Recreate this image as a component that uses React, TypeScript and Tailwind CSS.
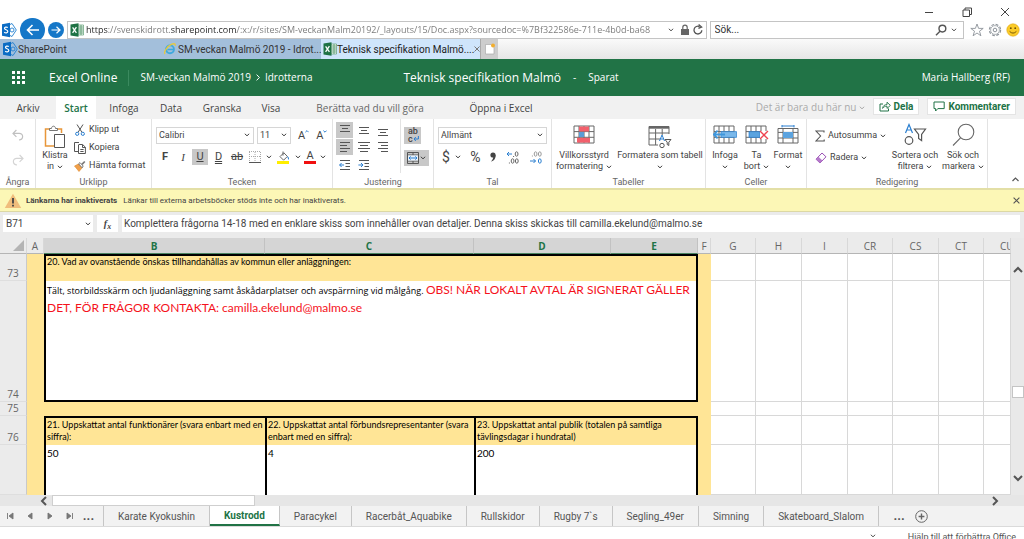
import React from 'react';
import { clsx } from 'clsx';

type Children = { children?: React.ReactNode };

const Chevron: React.FC<{ className?: string }> = ({ className }) => (
  <svg viewBox="0 0 6 4" className={clsx('inline-block w-[6px] h-1 shrink-0', className)} fill="none" stroke="currentColor">
    <path d="M0.8 0.8 L3 2.8 L5.2 0.8" />
  </svg>
);

const SharePointIcon = () => (
  <svg viewBox="0 0 16 16" className="w-4 h-4 shrink-0">
    <path d="M8 3 L11 1.5 L15.3 8 L11 14.5 L8 13" fill="none" stroke="#1f7fd0" strokeWidth="0.9" />
    <circle cx="11" cy="8" r="2" fill="none" stroke="#1f7fd0" strokeWidth="0.9" />
    <path d="M1 2.2 L9 0.8 V15.2 L1 13.8 Z" fill="#0b6cc4" />
    <path d="M6.8 5.6 C5.4 4.6 3.4 5 3.5 6.4 C3.6 8 6.9 7.6 6.8 9.5 C6.7 11.1 4.4 11.2 3.2 10.2" fill="none" stroke="#fff" strokeWidth="1.2" />
  </svg>
);

const ExcelIcon = () => (
  <svg viewBox="0 0 14 14" className="w-3.5 h-3.5 shrink-0">
    <path d="M8 2 H13.5 V12 H8 Z" fill="#fff" stroke="#5a9b70" strokeWidth="0.7" />
    <path d="M9 4 H13 M9 6 H13 M9 8 H13 M9 10 H13 M11 2 V12" stroke="#5a9b70" strokeWidth="0.9" />
    <path d="M0.5 1.6 L8.5 0.3 V13.7 L0.5 12.4 Z" fill="#1e7244" />
    <path d="M2.6 4.4 L6.4 9.8 M6.4 4.2 L2.6 9.8" stroke="#fff" strokeWidth="1.3" />
  </svg>
);

const IeIcon = () => (
  <svg viewBox="0 0 14 14" className="w-3 h-3 shrink-0" fill="none">
    <circle cx="7" cy="7.4" r="4.6" stroke="#3fa9dd" strokeWidth="2.2" />
    <path d="M4 7.6 H11.4" stroke="#3fa9dd" strokeWidth="1.8" />
    <path d="M1.2 12.8 C-0.8 10.4 4 3.6 9.2 1.4 C12 0.3 13.6 1 12.9 3.2" stroke="#e9c93b" strokeWidth="1.5" />
  </svg>
);

// Window title buttons and address bar
const BrowserChrome = () => (
  <header className="shrink-0 bg-white text-[#333] font-[Roboto,sans-serif]">
    <div className="h-5 flex justify-end items-end gap-7 pr-[14px] text-[#444]">
      <button aria-label="Minimera" className="pb-[3px]">
        <svg viewBox="0 0 10 10" className="w-2.5 h-2.5" stroke="currentColor"><path d="M1 5.5 H9" /></svg>
      </button>
      <button aria-label="Återställ" className="pb-[3px]">
        <svg viewBox="0 0 10 10" className="w-2.5 h-2.5" fill="none" stroke="currentColor"><path d="M1 3 H7.5 V9.5 H1 Z M3 3 V1 H9.5 V7.5 H7.5" /></svg>
      </button>
      <button aria-label="Stäng" className="pb-[3px]">
        <svg viewBox="0 0 10 10" className="w-2.5 h-2.5" stroke="currentColor"><path d="M1 1 L9 9 M9 1 L1 9" /></svg>
      </button>
    </div>
    <div className="h-[19px] flex items-center pr-1">
      <span className="w-5 pl-[1px]"><SharePointIcon /></span>
      <button aria-label="Bakåt" className="w-[25px] h-6 -my-1 rounded-full bg-[#1577c8] grid place-items-center text-white">
        <svg viewBox="0 0 14 12" className="w-3.5 h-3" fill="none" stroke="currentColor" strokeWidth="1.6"><path d="M13 6 H1.5 M6.5 1 L1.5 6 L6.5 11" /></svg>
      </button>
      <button aria-label="Framåt" className="ml-[3px] w-4 h-4 rounded-full bg-[#1577c8] grid place-items-center text-white">
        <svg viewBox="0 0 10 8" className="w-2.5 h-2" fill="none" stroke="currentColor" strokeWidth="1.2"><path d="M0.5 4 H9 M5.5 0.8 L9 4 L5.5 7.2" /></svg>
      </button>
      <div className="ml-[3px] h-[18px] flex-[648] min-w-0 flex items-center border border-[#c4c4c4] pl-[2px] pr-[2px] gap-[2px]">
        <ExcelIcon />
        <input
          aria-label="Adress"
          defaultValue="https://svenskidrott.sharepoint.com/:x:/r/sites/SM-veckanMalm20192/_layouts/15/Doc.aspx?sourcedoc=%7Bf322586e-711e-4b0d-ba68"
          className="flex-1 min-w-0 h-4 text-[9px] font-['Open_Sans',sans-serif] outline-none bg-clip-text text-transparent bg-[linear-gradient(90deg,#222_22px,#777_22px,#777_85px,#222_85px,#222_151px,#777_151px)]"
        />
        <Chevron className="mr-1 text-[#555]" />
        <svg viewBox="0 0 10 12" className="w-2.5 h-3 shrink-0" fill="#666"><path d="M1 5 H9 V11 H1 Z" /><path d="M2.8 5 V3.4 a2.2 2.2 0 0 1 4.4 0 V5" fill="none" stroke="#666" strokeWidth="1.2" /></svg>
        <button aria-label="Uppdatera">
          <svg viewBox="0 0 12 12" className="w-3 h-3" fill="none" stroke="#555" strokeWidth="1.3"><path d="M9.8 6.2 A3.9 3.9 0 1 1 7.6 2.6 M6.6 0.6 L9.6 3 L6.4 4.4" /></svg>
        </button>
      </div>
      <div className="ml-[3px] h-[18px] flex-[248] min-w-0 flex items-center border border-[#c4c4c4] pl-1 pr-[6px]">
        <input aria-label="Sök" defaultValue="Sök..." className="flex-1 min-w-0 h-4 text-[10px] outline-none" />
        <svg viewBox="0 0 12 12" className="w-3 h-3" fill="none" stroke="#555" strokeWidth="1.4"><circle cx="7.4" cy="4.6" r="3.4" /><path d="M5 7.2 L1 11.2" /></svg>
        <Chevron className="ml-1 text-[#555]" />
      </div>
      <div className="flex items-center gap-1 ml-[6px]">
        <svg viewBox="0 0 14 14" className="w-3.5 h-3.5" fill="none" stroke="#8d939a" strokeWidth="0.9"><path d="M7 1 L8.6 5.4 H13.2 L9.5 8.2 L10.9 12.8 L7 10 L3.1 12.8 L4.5 8.2 L0.8 5.4 H5.4 Z" /></svg>
        <svg viewBox="0 0 14 14" className="w-3.5 h-3.5" fill="none" stroke="#8d939a"><circle cx="7" cy="7" r="5.6" strokeWidth="1.2" strokeDasharray="2.8 1.6" /><circle cx="7" cy="7" r="4.4" strokeWidth="0.7" /><circle cx="7" cy="7" r="1.8" /></svg>
        <svg viewBox="0 0 14 14" className="w-3.5 h-3.5"><circle cx="7" cy="7" r="6.2" fill="#fbcb28" stroke="#dba514" strokeWidth="0.6" /><circle cx="4.8" cy="5.2" r="0.9" fill="#6b4d05" /><circle cx="9.2" cy="5.2" r="0.9" fill="#6b4d05" /><path d="M3.6 8.4 Q7 11.8 10.4 8.4" fill="none" stroke="#6b4d05" strokeWidth="0.9" /></svg>
      </div>
    </div>
    <nav className="h-5 flex bg-linear-to-b from-[#fafafa] to-[#e6e6e6] text-[10px]">
      <a href="#sharepoint" className="w-[161px] pl-[2px] flex items-center bg-[#a3bfdb] text-[#333]"><SharePointIcon />SharePoint</a>
      <a href="#idrotterna" className="w-40 pl-[3px] flex items-center gap-[2px] bg-[#a3bfdb] text-[#333] whitespace-nowrap"><IeIcon />SM-veckan Malmö 2019 - Idrot...</a>
      <a href="#teknisk" className="w-[159px] pl-[2px] pr-[2px] flex items-center bg-[#cfe5fb] text-[#222] whitespace-nowrap">
        <ExcelIcon />Teknisk specifikation Malmö....
        <svg viewBox="0 0 6 6" className="w-[6px] h-[6px] ml-auto shrink-0" stroke="#777"><path d="M0.5 0.5 L5.5 5.5 M5.5 0.5 L0.5 5.5" /></svg>
      </a>
      <button aria-label="Ny flik" className="w-[18px] bg-[#cdcdcd] border-l border-[#aaa] grid place-items-center">
        <svg viewBox="0 0 12 12" className="w-3 h-3"><path d="M1.5 1.5 H7 L10 4.5 V11 H1.5 Z" fill="#fff" stroke="#aaa" strokeWidth="0.7" /><circle cx="9" cy="2.6" r="2" fill="#f2ae2e" /></svg>
      </button>
    </nav>
  </header>
);

const AppHeader = () => (
  <div className="shrink-0 h-[37px] flex items-center bg-[#217346] text-white text-[10px] pl-3 pr-[14px] whitespace-nowrap">
    <div className="flex-1 flex items-center">
      <button aria-label="Appstartare" className="w-[37px]">
        <svg viewBox="0 0 13 13" className="w-[13px] h-[13px]" fill="#fff">
          {[0, 5, 10].map(y => [0, 5, 10].map(x => <rect key={`${x}-${y}`} x={x} y={y} width="3" height="3" />))}
        </svg>
      </button>
      <span className="text-[12px]">Excel Online</span>
      <span className="mx-[11px] w-px h-4 bg-[#3b8a5f]" />
      <a href="#smveckan">SM-veckan Malmö 2019</a>
      <svg viewBox="0 0 4 7" className="mx-[5px] w-1 h-[7px]" fill="none" stroke="#fff"><path d="M0.6 0.6 L3.4 3.5 L0.6 6.4" /></svg>
      <a href="#idrotterna">Idrotterna</a>
    </div>
    <div className="flex items-center gap-3">
      <span className="text-[12px]">Teknisk specifikation Malmö</span>
      <span>-</span>
      <span>Sparat</span>
    </div>
    <span className="flex-1 text-right">Maria Hallberg (RF)</span>
  </div>
);

const RIBBON_TABS = [
  { label: 'Arkiv', width: 'w-14' },
  { label: 'Start', width: 'w-10' },
  { label: 'Infoga', width: 'w-14' },
  { label: 'Data', width: 'w-[38px]' },
  { label: 'Granska', width: 'w-16' },
  { label: 'Visa', width: 'w-[34px]' },
  { label: 'Berätta vad du vill göra', width: 'w-[164px]' },
  { label: 'Öppna i Excel', width: 'w-[98px]' },
];

const RibbonTabs = () => (
  <div className="shrink-0 h-[23px] flex items-stretch bg-[#f1f1f1] text-[10px] text-[#444] whitespace-nowrap pr-2">
    {RIBBON_TABS.map(tab => (
      <button
        key={tab.label}
        className={clsx(
          'flex justify-center items-center pt-[2px]',
          tab.width,
          tab.label === 'Start' && 'bg-white text-[#217346] font-semibold',
          tab.label === 'Berätta vad du vill göra' && 'text-[#666]'
        )}
      >
        {tab.label}
      </button>
    ))}
    <div className="flex-1" />
    <button className="text-[#aaa] flex items-center gap-[2px] mr-2">Det är bara du här nu <Chevron /></button>
    <button className="my-[2px] h-[17px] px-[5px] bg-white border border-[#e4e4e4] text-[#217346] font-bold font-[Roboto,sans-serif] flex items-center gap-[3px]">
      <svg viewBox="0 0 12 11" className="w-3 h-[11px]" fill="none" stroke="currentColor"><path d="M4 3 H1 V10 H9.5 V7.5" /><path d="M3.6 7.4 C3.8 4.8 5.6 3.6 8 3.6 V1.2 L11.4 4.4 L8 7.4 V5.2 C6 5.2 4.8 5.8 3.6 7.4 Z" strokeWidth="0.9" /></svg>
      Dela
    </button>
    <button className="my-[2px] ml-2 h-[17px] px-[5px] bg-white border border-[#e4e4e4] text-[#217346] font-bold font-[Roboto,sans-serif] flex items-center gap-[3px]">
      <svg viewBox="0 0 12 11" className="w-3 h-[11px]" fill="none" stroke="currentColor"><path d="M1 1 H11.2 V7.6 H4.8 L2.6 10 V7.6 H1 Z" /></svg>
      Kommentarer
    </button>
  </div>
);

const Group: React.FC<Children & { label: string; className: string }> = ({ label, className, children }) => (
  <section aria-label={label} className={clsx('shrink-0 flex flex-col border-r border-[#e3e3e3]', className)}>
    <div className="h-[57px] flex">{children}</div>
    <div className="h-3 leading-3 text-[9px] text-center text-[#666]">{label}</div>
  </section>
);

const BigButton: React.FC<Children & { lines: string[]; className: string }> = ({ lines, className, children }) => (
  <button className={clsx('shrink-0 flex flex-col items-center whitespace-nowrap leading-[11px]', className)}>
    <span className="h-[31px] flex items-center justify-center">{children}</span>
    <span>{lines[0]}</span>
    <span className="flex items-center gap-[3px]">{lines[1]}<Chevron className={clsx(!lines[1] && 'mt-1')} /></span>
  </button>
);

const Dropdown: React.FC<{ label: string; value: string; className: string }> = ({ label, value, className }) => (
  <div className={clsx('relative h-[17px]', className)}>
    <select aria-label={label} defaultValue={value} className="w-full h-full appearance-none border border-[#d6d6d6] bg-white pl-[2px] text-[9px] leading-none outline-none">
      <option>{value}</option>
    </select>
    <Chevron className="absolute right-1 top-[6px] pointer-events-none" />
  </div>
);

const LINES = {
  top: 'M2 1.5 H12 M4 4.5 H10 M2 7.5 H12',
  middle: 'M2 3.5 H12 M4 6.5 H10 M2 9.5 H12',
  bottom: 'M2 5.5 H12 M4 8.5 H10 M2 11.5 H12',
  left: 'M2 1.5 H12 M2 4.5 H9 M2 7.5 H12 M2 10.5 H9',
  center: 'M1 1.5 H13 M3 4.5 H11 M1 7.5 H13 M3 10.5 H11',
  right: 'M2 1.5 H12 M5 4.5 H12 M2 7.5 H12 M5 10.5 H12',
};

const AlignButton: React.FC<{ kind: keyof typeof LINES; label: string; active?: boolean }> = ({ kind, label, active }) => (
  <button aria-label={label} className={clsx('h-4 grid place-items-center', active && 'bg-[#c8c8c8]')}>
    <svg viewBox="0 0 14 13" className="w-3.5 h-[13px]" stroke="#555"><path d={LINES[kind]} /></svg>
  </button>
);

const IndentButton: React.FC<{ label: string; out?: boolean }> = ({ label, out }) => (
  <button aria-label={label} className="h-4 grid place-items-center">
    <svg viewBox="0 0 12 10" className="w-3 h-2.5" fill="none">
      <path d="M1 0.5 H11 M6.5 3.5 H11 M6.5 6.5 H11 M1 9.5 H11" stroke="#555" />
      <path d={out ? 'M5 5 H0.6 M2.6 3 L0.6 5 L2.6 7' : 'M0.4 5 H5 M3 3 L5 5 L3 7'} stroke="#2b7fd0" />
    </svg>
  </button>
);

const DecimalButton: React.FC<{ label: string; increase?: boolean }> = ({ label, increase }) => (
  <button aria-label={label}>
    <svg viewBox="0 0 14 13" className="w-3.5 h-[13px]" fill="none">
      {increase ? (
        <>
          <path d="M6 3 H1 M3 1 L1 3 L3 5" stroke="#2b7fd0" />
          <ellipse cx="10.6" cy="3" rx="1.4" ry="2.2" stroke="#666" />
          <ellipse cx="6.6" cy="10" rx="1.4" ry="2.2" stroke="#666" />
          <ellipse cx="10.8" cy="10" rx="1.4" ry="2.2" stroke="#666" />
          <path d="M7.6 5 V6 M3.4 11.5 V12.5" stroke="#666" />
        </>
      ) : (
        <>
          <ellipse cx="6.6" cy="3" rx="1.4" ry="2.2" stroke="#999" />
          <ellipse cx="10.8" cy="3" rx="1.4" ry="2.2" stroke="#999" />
          <path d="M3.4 4.5 V5.5" stroke="#999" />
          <path d="M1 10 H6.5 M4.5 8 L6.5 10 L4.5 12" stroke="#2b7fd0" />
          <ellipse cx="10.8" cy="10" rx="1.4" ry="2.2" stroke="#2b7fd0" />
        </>
      )}
    </svg>
  </button>
);

const FontSizeIcon: React.FC<{ down?: boolean }> = ({ down }) => (
  <span className="flex items-start text-[11px] leading-4">
    A
    <svg viewBox="0 0 4 3" className="w-1 h-[3px] mt-[2px]" fill="none" stroke="#2b7fd0"><path d={down ? 'M0.4 0.6 L2 2.2 L3.6 0.6' : 'M0.4 2.2 L2 0.6 L3.6 2.2'} /></svg>
  </span>
);

// 4x3 cell grid used by the table and cell icons
const GRID = 'M1 1 H21 V18 H1 Z M1 6.6 H21 M1 12.3 H21 M6 1 V18 M11 1 V18 M16 1 V18';

const Ribbon = () => (
  <div className="shrink-0 h-[69px] flex bg-white text-[9px] text-[#444] font-[Roboto,sans-serif]">
    <Group label="Ångra" className="w-[36px]">
      <div className="w-full flex flex-col items-center justify-around py-1">
        <button aria-label="Ångra">
          <svg viewBox="0 0 12 12" className="w-3 h-3" fill="none" stroke="#c0c0c0" strokeWidth="1.2"><path d="M1 4.4 H7.2 C12 4.6 11.6 10.6 7 11 M4.4 1 L1 4.4 L4.4 7.8" /></svg>
        </button>
        <button aria-label="Gör om">
          <svg viewBox="0 0 12 12" className="w-3 h-3" fill="none" stroke="#d4d4d4" strokeWidth="1.2"><path d="M11 4.4 H4.8 C0 4.6 0.4 10.6 5 11 M7.6 1 L11 4.4 L7.6 7.8" /></svg>
        </button>
      </div>
    </Group>

    <Group label="Urklipp" className="w-[116px]">
      <BigButton lines={['Klistra', 'in']} className="w-[38px]">
        <svg viewBox="0 0 22 24" className="w-[22px] h-6 mt-1" fill="none">
          <path d="M6 4 H1.5 V21 H10" stroke="#e8963a" strokeWidth="1.5" />
          <path d="M13 4 H17.5 V8" stroke="#e8963a" strokeWidth="1.5" />
          <path d="M5.5 5.5 V3.5 H7.5 C7.5 0.4 11.5 0.4 11.5 3.5 H13.5 V5.5 Z" stroke="#777" />
          <path d="M10.5 9.5 H20.5 V22.5 H10.5 Z" stroke="#555" fill="#fff" />
        </svg>
      </BigButton>
      <div className="flex flex-col pt-[2px] whitespace-nowrap">
        <button className="h-[18px] flex items-center gap-[3px]">
          <svg viewBox="0 0 12 12" className="w-3 h-3" fill="none"><path d="M3 0.5 L8 8.4 M9 0.5 L4 8.4" stroke="#555" /><circle cx="3.2" cy="9.8" r="1.6" stroke="#2b7fd0" /><circle cx="8.8" cy="9.8" r="1.6" stroke="#2b7fd0" /></svg>
          Klipp ut
        </button>
        <button className="h-[18px] flex items-center gap-[3px]">
          <svg viewBox="0 0 12 12" className="w-3 h-3" fill="none" stroke="#555"><path d="M4 9.5 H0.5 V0.5 H5 M5 2.5 H8.6 L11.4 5.2 V11.5 H4.5 V2.5 M8.5 2.8 V5.5 H11.3 M6.3 7.5 H9.6 M6.3 9.5 H9.6" /></svg>
          Kopiera
        </button>
        <button className="h-[18px] flex items-center gap-[3px]">
          <svg viewBox="0 0 12 12" className="w-3 h-3"><path d="M0.5 6 L4.5 4 L8 8 L5 11.5 Z" fill="#f0a04b" stroke="#e08a2a" strokeWidth="0.6" /><path d="M4.6 3.8 L6 2.6 L9.2 6 L8.2 7.8 Z" fill="#fff" stroke="#555" strokeWidth="0.8" /><path d="M7.4 3.8 L10.2 0.9 L11.4 2.1 L8.6 5" fill="#777" /></svg>
          Hämta format
        </button>
      </div>
    </Group>

    <Group label="Tecken" className="w-[181px]">
      <div className="w-full pl-1 pt-2">
        <div className="flex items-center">
          <Dropdown label="Teckensnitt" value="Calibri" className="w-[98px]" />
          <Dropdown label="Teckenstorlek" value="11" className="ml-[3px] w-[34px]" />
          <button aria-label="Öka teckenstorlek" className="ml-[7px]"><FontSizeIcon /></button>
          <button aria-label="Minska teckenstorlek" className="ml-[7px]"><FontSizeIcon down /></button>
        </div>
        <div className="mt-[5px] h-4 flex items-center text-[11px]">
          <button className="w-[18px] font-bold">F</button>
          <button className="w-[18px] italic font-['Liberation_Serif',serif]">I</button>
          <button className="w-4 h-4 leading-4 bg-[#c8c8c8] underline">U</button>
          <button className="w-[21px] underline decoration-double">D</button>
          <button className="w-4 line-through">ab</button>
          <button aria-label="Kantlinjer" className="ml-1 flex items-center gap-[5px]">
            <svg viewBox="0 0 12 12" className="w-3 h-3" stroke="#aaa"><path d="M0.5 1 V11 M6 1 V11 M11.5 1 V11 M0 0.5 H12 M0 5.5 H12" strokeDasharray="1 1" /><path d="M0 11.5 H12" stroke="#555" /></svg>
            <Chevron />
          </button>
          <button aria-label="Fyllningsfärg" className="ml-[5px] flex items-center gap-[5px]">
            <svg viewBox="0 0 13 13" className="w-[13px] h-[13px]"><path d="M3 5.6 L6.8 1.8 L10.4 5.4 L6.6 9.2 Z" fill="#fff" stroke="#555" strokeWidth="0.9" /><path d="M6 0.5 V4.6" stroke="#555" strokeWidth="0.9" /><path d="M10.6 5.4 C12.4 6 12.2 8 11.6 9 L10 5.2 Z" fill="#2b7fd0" /><rect x="0" y="10" width="12" height="3" fill="#ffee00" /></svg>
            <Chevron />
          </button>
          <button aria-label="Teckenfärg" className="ml-[3px] flex items-center gap-1">
            <span className="w-3 h-[13px] leading-[10px] border-b-[3px] border-[#f01010]">A</span>
            <Chevron />
          </button>
        </div>
      </div>
    </Group>

    <Group label="Justering" className="w-[101px]">
      <div className="w-[68px] h-[54px] pl-[3px] pr-2 pt-[3px] grid grid-cols-3 gap-x-[2px] gap-y-[1px] border-r border-[#e3e3e3]">
        <AlignButton kind="top" label="Justera överst" active />
        <AlignButton kind="middle" label="Centrera lodrätt" />
        <AlignButton kind="bottom" label="Justera nederst" />
        <AlignButton kind="left" label="Vänsterjustera" active />
        <AlignButton kind="center" label="Centrera" />
        <AlignButton kind="right" label="Högerjustera" />
        <IndentButton label="Minska indrag" out />
        <IndentButton label="Öka indrag" />
      </div>
      <div className="pl-[3px] pt-2 flex flex-col items-start gap-[6px]">
        <button aria-label="Radbyt text" className="w-[17px] h-[17px] bg-[#c8c8c8] flex flex-col items-start pl-1 font-medium">
          <span className="h-2 leading-[9px]">ab</span>
          <span className="h-2 leading-[8px] flex items-center">
            c<svg viewBox="0 0 6 6" className="w-[6px] h-[6px]" fill="none" stroke="#2b7fd0"><path d="M5.4 0 V3 H1 M2.8 1 L1 3 L2.8 5" /></svg>
          </span>
        </button>
        <button aria-label="Slå ihop och centrera" className="w-[25px] h-4 bg-[#c8c8c8] flex items-center justify-between px-[3px]">
          <svg viewBox="0 0 12 12" className="w-3 h-3" fill="none"><path d="M0.5 0.5 H11.5 V11.5 H0.5 Z M0.5 3 H11.5 M0.5 9 H11.5 M6 0.5 V3 M6 9 V11.5" stroke="#555" /><path d="M1 3.4 H11 V8.6 H1 Z" fill="#e8f2fc" /><path d="M2 6 H10 M3.6 4.4 L2 6 L3.6 7.6 M8.4 4.4 L10 6 L8.4 7.6" stroke="#2b7fd0" /></svg>
          <Chevron className="w-1" />
        </button>
      </div>
    </Group>

    <Group label="Tal" className="w-[118px]">
      <div className="w-full px-1 pt-2">
        <Dropdown label="Talformat" value="Allmänt" className="w-full" />
        <div className="mt-[5px] h-4 flex items-center justify-between px-1 leading-4">
          <button aria-label="Valuta" className="flex items-center gap-[5px] text-[14px]">$<Chevron /></button>
          <button className="text-[14px]">%</button>
          <button aria-label="Tusentalsavgränsare">
            <svg viewBox="0 0 6 10" className="w-[6px] h-2.5" fill="#444"><circle cx="3" cy="3" r="2.6" /><path d="M5.6 3 C5.8 6.6 3.8 9 1 9.6 C2.6 8 3.4 6.4 3.2 4.6 Z" /></svg>
          </button>
          <DecimalButton label="Öka decimal" increase />
          <DecimalButton label="Minska decimal" />
        </div>
      </div>
    </Group>

    <Group label="Tabeller" className="w-[154px]">
      <BigButton lines={['Villkorsstyrd', 'formatering']} className="w-[64px]">
        <svg viewBox="0 0 22 19" className="w-[22px] h-[19px]"><path d={GRID} fill="none" stroke="#666" /><rect x="6" y="1.5" width="10" height="5" fill="#f2606c" /><rect x="6" y="7" width="5" height="5" fill="#5b9bd5" /><rect x="4" y="12.8" width="13" height="4.8" fill="#f2606c" /></svg>
      </BigButton>
      <BigButton lines={['Formatera som tabell', '']} className="w-[88px]">
        <svg viewBox="0 0 24 24" className="w-6 h-6 mt-1" fill="none">
          <path d="M1 1.5 H21 V9 M1 1.5 V20 H10 M1 8 H21 M1 14 H12 M7.6 4 V20 M14.2 4 V10" stroke="#666" />
          <path d="M1 2.5 H21" stroke="#666" strokeWidth="2.4" />
          <path d="M11.5 16 L14 10 L16.5 16 M12.4 14 H15.6" stroke="#2b7fd0" />
          <circle cx="14" cy="20.5" r="2.2" stroke="#555" />
          <path d="M17 14.5 H23 L20.8 17.2 V20.5 L19.2 19.5 V17.2 Z" stroke="#555" />
        </svg>
      </BigButton>
    </Group>

    <Group label="Celler" className="w-[101px]">
      <BigButton lines={['Infoga', '']} className="w-[38px]">
        <svg viewBox="0 0 24 19" className="w-6 h-[19px]"><path d={GRID} fill="none" stroke="#666" /><path d="M8 6.6 H23.5 V12.4 H8 Z" fill="#7ab8ea" stroke="#2b7fd0" strokeWidth="0.7" /><path d="M12 9.5 H1 M4.6 5.6 L0.8 9.5 L4.6 13.4" fill="none" stroke="#3f97dc" strokeWidth="1.8" /></svg>
      </BigButton>
      <BigButton lines={['Ta', 'bort']} className="w-[25px]">
        <svg viewBox="0 0 24 19" className="w-6 h-[19px]"><path d={GRID} fill="none" stroke="#666" /><path d="M4 6.6 H15 V12.4 H4 Z" fill="#5ba3df" stroke="#2b7fd0" strokeWidth="0.7" /><rect x="15" y="6" width="8" height="8" fill="#fff" /><path d="M15 6 L23 14 M23 6 L15 14" stroke="#ee4350" strokeWidth="1.4" /></svg>
      </BigButton>
      <BigButton lines={['Format', '']} className="w-[38px]">
        <svg viewBox="0 0 22 19" className="w-[22px] h-[19px]"><path d="M1 3.5 H21 V18 H1 Z M1 7.4 H21 M1 13 H21 M6 3.5 V18 M16 3.5 V18" fill="none" stroke="#666" /><rect x="6" y="7" width="10" height="6" fill="#5ba3df" /><path d="M5 1 H17 M5 0 V2.4 M17 0 V2.4" stroke="#2b7fd0" /></svg>
      </BigButton>
    </Group>

    <Group label="Redigering" className="w-[181px]">
      <div className="w-[84px] shrink-0 pl-2 pt-2 flex flex-col gap-[5px] whitespace-nowrap">
        <button className="h-[17px] flex items-center gap-[3px]">
          <svg viewBox="0 0 10 12" className="w-2.5 h-3 shrink-0" fill="none" stroke="#555" strokeWidth="1.1"><path d="M9 2.6 V1 H1 L5.6 6 L1 11 H9.2 V9.4" /></svg>
          Autosumma <Chevron />
        </button>
        <button className="h-[17px] flex items-center gap-[3px]">
          <svg viewBox="0 0 12 12" className="w-3 h-3 shrink-0"><path d="M1 7.2 L7 1 L11 4.8 L5 11 Z" fill="#fff" stroke="#9a4fb5" /><path d="M1 7.2 L3.4 4.8 L7.4 8.6 L5 11 Z" fill="#b57acb" /></svg>
          Radera <Chevron />
        </button>
      </div>
      <BigButton lines={['Sortera och', 'filtrera']} className="w-12">
        <svg viewBox="0 0 24 24" className="w-6 h-6" fill="none"><path d="M2.5 10 L6 1.5 L9.5 10 M3.6 7 H8.4" stroke="#2b7fd0" strokeWidth="1.2" /><circle cx="6" cy="17.5" r="3.8" stroke="#555" strokeWidth="1.2" /><path d="M11.5 6 H22.5 L18.6 11.4 V17.5 L15.6 15.4 V11.4 Z" stroke="#555" strokeWidth="1.2" /></svg>
      </BigButton>
      <BigButton lines={['Sök och', 'markera']} className="w-12">
        <svg viewBox="0 0 24 24" className="w-6 h-6" fill="none" stroke="#666" strokeWidth="1.1"><circle cx="15" cy="9" r="7.8" /><path d="M9.5 14.8 L2 22.5" /></svg>
      </BigButton>
    </Group>

    <div className="flex-1 flex items-end justify-end pr-[5px] pb-[6px]">
      <button aria-label="Dölj menyfliksområdet">
        <svg viewBox="0 0 7 5" className="w-[7px] h-[5px]" fill="none" stroke="#555" strokeWidth="1.2"><path d="M0.5 4 L3.5 1 L6.5 4" /></svg>
      </button>
    </div>
  </div>
);

const WarningBar = () => (
  <div role="alert" className="shrink-0 h-6 flex items-center bg-[#fcf7b6] border-t-2 border-b border-t-[#e3dfa6] border-b-[#dcd8a4] text-[8px] text-[#444] whitespace-nowrap pl-1 pr-[4px] font-[Roboto,sans-serif]">
    <svg viewBox="0 0 18 16" className="w-[18px] h-4 mr-1"><path d="M9 0.8 L17.2 15 H0.8 Z" fill="#f0bd7c" /><path d="M9 5 V10.4 M9 11.8 V13.4" stroke="#444" strokeWidth="1.8" /></svg>
    <b>Länkarna har inaktiverats</b>
    <span className="ml-[6px] flex-1">Länkar till externa arbetsböcker stöds inte och har inaktiverats.</span>
    <button aria-label="Stäng meddelande">
      <svg viewBox="0 0 7 7" className="w-[7px] h-[7px]" stroke="#555" strokeWidth="1.1"><path d="M0.6 0.6 L6.4 6.4 M6.4 0.6 L0.6 6.4" /></svg>
    </button>
  </div>
);

const FormulaBar = () => (
  <div className="shrink-0 h-[26px] flex items-start gap-1 bg-[#ebebeb] text-[10px] text-[#444] pl-[3px] pr-1 pt-[3px] font-[Roboto,sans-serif]">
    <div className="w-[90px] h-[17px] bg-white flex items-center pr-[2px]">
      <input aria-label="Namnruta" defaultValue="B71" className="w-0 flex-1 h-full pl-[3px] outline-none" />
      <Chevron />
    </div>
    <button className="w-[21px] h-[17px] bg-white italic font-bold font-['Liberation_Serif',serif]">f<sub className="text-[8px]">x</sub></button>
    <input
      aria-label="Formelfält"
      defaultValue="Komplettera frågorna 14-18 med en enklare skiss som innehåller ovan detaljer. Denna skiss skickas till camilla.ekelund@malmo.se"
      className="flex-1 min-w-0 h-[17px] bg-white pl-[2px] outline-none"
    />
  </div>
);

const COLUMNS = [
  { name: '', width: 'w-[27px]' },
  { name: 'A', width: 'w-[17px]' },
  { name: 'B', width: 'w-[221px]' },
  { name: 'C', width: 'w-[209px]' },
  { name: 'D', width: 'w-[137px]' },
  { name: 'E', width: 'w-[87px]' },
  { name: 'F', width: 'w-[13px]' },
  { name: 'G', width: 'w-[45px]' },
  { name: 'H', width: 'w-[46px]' },
  { name: 'I', width: 'w-[46px]' },
  { name: 'CR', width: 'w-[45px]' },
  { name: 'CS', width: 'w-[46px]' },
  { name: 'CT', width: 'w-[45px]' },
  { name: 'CU', width: '' },
];

const SELECTED = ['B', 'C', 'D', 'E'];

const EmptyCells = () => (
  <>
    {COLUMNS.slice(7).map(col => <td key={col.name} className="border-r border-b border-[#d8d8d8]" />)}
  </>
);

const Row: React.FC<Children & { no?: string; className: string }> = ({ no, className, children }) => (
  <tr className={className}>
    <th className="bg-[#ebebeb] border-b border-r border-b-[#dedede] border-r-[#c9c9c9] align-bottom font-normal text-[10px] leading-[13px] text-[#666] font-['Open_Sans',sans-serif]">{no}</th>
    <td className="bg-[#ffe596]" />
    {children}
    <td className="bg-[#ffe596]" />
    <EmptyCells />
  </tr>
);

const Sheet = () => (
  <div className="flex-1 min-h-0 flex bg-white">
    <div className="flex-1 min-w-0 overflow-hidden">
      <table className="w-full h-full table-fixed border-separate border-spacing-0 text-[10px] text-black font-[Lato,sans-serif]">
        <colgroup>
          {COLUMNS.map(col => <col key={col.name} className={col.width} />)}
        </colgroup>
        <thead className="font-['Open_Sans',sans-serif]">
          <tr className="h-4">
            {COLUMNS.map(col => (
              <th
                key={col.name}
                className={clsx(
                  'border-r border-b leading-[14px] overflow-hidden',
                  SELECTED.includes(col.name)
                    ? 'bg-[#d5d5d5] text-[#217346] border-r-[#c2c2c2] border-b-[#4b8562] font-bold'
                    : 'bg-[#ebebeb] text-[#666] border-r-[#d8d8d8] border-b-[#b5b5b5] font-normal',
                  col.name === 'CU' && 'pl-4'
                )}
              >
                {col.name || <svg viewBox="0 0 11 11" className="w-[11px] h-[11px] ml-auto mr-[2px]"><path d="M11 0 V11 H0 Z" fill="#b4b4b4" /></svg>}
              </th>
            ))}
          </tr>
        </thead>
        <tbody>
          <Row no="73" className="h-[27px]">
            <td colSpan={4} className="bg-[#ffe596] border-2 border-b-0 border-black align-top leading-3 pl-[1px] text-[9px]">20. Vad av ovanstående önskas tillhandahållas av kommun eller anläggningen:</td>
          </Row>
          <Row no="74" className="h-[121px]">
            <td colSpan={4} className="border-2 border-t-0 border-black align-top leading-[17px] pl-[1px] text-[12px]">
              <span className="text-[9px] font-['Open_Sans',sans-serif]">Tält, storbildsskärm och ljudanläggning samt åskådarplatser och avspärrning vid målgång. </span>
              <span className="text-[#f5121c]">OBS! NÄR LOKALT AVTAL ÄR SIGNERAT GÄLLER DET, FÖR FRÅGOR KONTAKTA: camilla.ekelund@malmo.se</span>
            </td>
          </Row>
          <Row no="75" className="h-[14px]">
            <td colSpan={4} className="bg-[#ffe596]" />
          </Row>
          <Row no="76" className="h-[29px]">
            <td className="bg-[#ffe596] border-l-2 border-t-2 border-black align-top leading-3 pl-[1px] pt-[1px] text-[9px]">21. Uppskattat antal funktionärer (svara enbart med en siffra):</td>
            <td className="bg-[#ffe596] border-l-2 border-t-2 border-black align-top leading-3 pl-[1px] pt-[1px] text-[9px]">22. Uppskattat antal förbundsrepresentanter (svara enbart med en siffra):</td>
            <td colSpan={2} className="bg-[#ffe596] border-x-2 border-t-2 border-black align-top leading-3 pl-[1px] pt-[1px] text-[9px]">23. Uppskattat antal publik (totalen på samtliga<br />tävlingsdagar i hundratal)</td>
          </Row>
          <Row className="">
            <td className="border-l-2 border-black align-top leading-4 pl-[1px]">50</td>
            <td className="border-l-2 border-black align-top leading-4 pl-[1px]">4</td>
            <td colSpan={2} className="border-x-2 border-black align-top leading-4 pl-[1px]">200</td>
          </Row>
        </tbody>
      </table>
    </div>
    {/* Vertical scrollbar */}
    <div className="w-[13px] shrink-0 bg-[#e9e9e9] flex flex-col items-center pt-7 pb-[13px] text-[#555]">
      <svg viewBox="0 0 10 7" className="w-2.5 h-[7px]" fill="none" stroke="currentColor" strokeWidth="2"><path d="M1 6 L5 2 L9 6" /></svg>
      <div className="flex-[112]" />
      <div className="w-3 h-3 bg-white border border-[#c4c4c4]" />
      <div className="flex-[77]" />
      <svg viewBox="0 0 10 7" className="w-2.5 h-[7px]" fill="none" stroke="currentColor" strokeWidth="2"><path d="M1 1 L5 5 L9 1" /></svg>
    </div>
  </div>
);

const SHEET_TABS = ['Karate Kyokushin', 'Kustrodd', 'Paracykel', 'Racerbåt_Aquabike', 'Rullskidor', 'Rugby 7`s', 'Segling_49er', 'Simning', 'Skateboard_Slalom'];

const NAV = [
  { label: 'Första bladet', d: 'M1.5 1 V7 M7 1 L3 4 L7 7 Z' },
  { label: 'Föregående blad', d: 'M6 1 L2 4 L6 7 Z' },
  { label: 'Nästa blad', d: 'M2 1 L6 4 L2 7 Z' },
  { label: 'Sista bladet', d: 'M1 1 L5 4 L1 7 Z M6.5 1 V7' },
];

const BottomBars = () => (
  <footer className="shrink-0 font-[Roboto,sans-serif]">
    <div className="h-[11px] bg-[#e6e6e6] flex items-center pl-10 pr-[25px] text-[#555]">
      <svg viewBox="0 0 7 10" className="w-[7px] h-2.5" fill="none" stroke="currentColor" strokeWidth="2"><path d="M6 1 L2 5 L6 9" /></svg>
      <div className="ml-[5px] w-[203px] h-[11px] bg-white border border-[#cfcfcf]" />
      <div className="flex-1" />
      <svg viewBox="0 0 7 10" className="w-[7px] h-2.5" fill="none" stroke="currentColor" strokeWidth="2"><path d="M1 1 L5 5 L1 9" /></svg>
    </div>
    <div className="h-[21px] flex items-stretch bg-[#f2f2f2] border-b border-[#dadada] text-[10px] text-[#555] whitespace-nowrap">
      <div className="flex items-center gap-3 pl-[6px]">
        {NAV.map(item => (
          <button key={item.label} aria-label={item.label}>
            <svg viewBox="0 0 8 8" className="w-2 h-2" fill="#777" stroke="#777" strokeWidth="0.9"><path d={item.d} /></svg>
          </button>
        ))}
      </div>
      <button className="w-[30px] text-[13px] font-bold leading-5 border-r border-[#c6c6c6]">...</button>
      {SHEET_TABS.map(name => (
        <button
          key={name}
          className={clsx(
            'px-[14px] border-r border-[#c6c6c6]',
            name === 'Kustrodd' && 'bg-white text-[#217346] font-bold border-b-2 border-b-[#217346]'
          )}
        >
          {name}
        </button>
      ))}
      <button className="w-9 pl-1 text-[13px] font-bold leading-5">...</button>
      <button aria-label="Nytt blad">
        <svg viewBox="0 0 13 13" className="w-[13px] h-[13px]" fill="none" stroke="#666"><circle cx="6.5" cy="6.5" r="5.8" /><path d="M6.5 3.6 V9.4 M3.6 6.5 H9.4" strokeWidth="1.4" /></svg>
      </button>
    </div>
    <div className="h-3 overflow-hidden bg-white flex justify-end items-start gap-8 pr-2 pt-[3px] text-[9px] leading-[14px] text-[#555] whitespace-nowrap">
      <Chevron className="mt-1" />
      <a href="#feedback">Hjälp till att förbättra Office</a>
    </div>
  </footer>
);

export default function App() {
  return (
    <div className="h-screen flex flex-col overflow-hidden bg-white font-['Open_Sans','Noto_Sans',sans-serif]">
      <BrowserChrome />
      <AppHeader />
      <RibbonTabs />
      <Ribbon />
      <WarningBar />
      <FormulaBar />
      <Sheet />
      <BottomBars />
    </div>
  );
}
